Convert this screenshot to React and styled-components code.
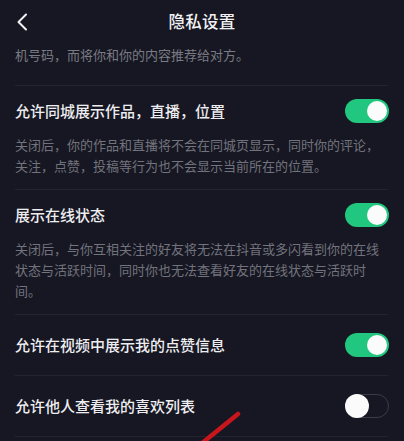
import React from "react";
import styled, { createGlobalStyle } from "styled-components";

const Global = createGlobalStyle`
  html, body { margin: 0; padding: 0; background: #161722; }
  body { font-family: "Noto Sans CJK SC", "Noto Sans", sans-serif; }
`;

const Page = styled.div`
  position: relative;
  width: 404px;
  height: 441px;
  overflow: hidden;
  background: #161722;
  color: #ececef;
  box-sizing: border-box;
`;

const Header = styled.header`
  position: relative;
  height: 42px;
  display: flex;
  align-items: center;
  justify-content: center;
`;

const Back = styled.button`
  position: absolute;
  left: 12px;
  top: 11px;
  width: 20px;
  height: 22px;
  padding: 0;
  border: none;
  background: transparent;
  display: flex;
  align-items: center;
  justify-content: center;
`;

const Title = styled.h1`
  margin: 0;
  font-size: 16.5px;
  font-weight: 500;
  color: #f2f2f4;
  letter-spacing: 0.3px;
`;

const Body = styled.div`
  padding: 0 16px 0 15px;
`;

const Intro = styled.p`
  margin: 0;
  padding: 2px 0 20px;
  font-size: 13px;
  line-height: 21px;
  color: #7a7b83;
  border-bottom: 1px solid #22242e;
`;

const Row = styled.div`
  border-bottom: 1px solid #22242e;
  padding: ${(p) => (p.$simple ? "0" : "14px 0 13px")};
  min-height: ${(p) => (p.$simple ? "60px" : "0")};
  display: flex;
  flex-direction: column;
  justify-content: center;
`;

const Head = styled.div`
  display: flex;
  align-items: center;
  justify-content: space-between;
  height: 22px;
`;

const Label = styled.span`
  font-size: 15px;
  font-weight: 500;
  color: #eeeef1;
  line-height: 22px;
`;

const Desc = styled.p`
  margin: 12px 0 0;
  font-size: 13px;
  line-height: 21px;
  color: #72737c;
`;

const Track = styled.span`
  position: relative;
  flex: none;
  width: 44px;
  height: 24px;
  border-radius: 12px;
  box-sizing: border-box;
  background: ${(p) => (p.$on ? "#21c77f" : "transparent")};
  border: ${(p) => (p.$on ? "none" : "1.5px solid #3a3c47")};
  margin-right: -1px;
`;

const Knob = styled.span`
  position: absolute;
  top: ${(p) => (p.$on ? "2px" : "-1.5px")};
  left: ${(p) => (p.$on ? "22px" : "-1.5px")};
  width: ${(p) => (p.$on ? "20px" : "24px")};
  height: ${(p) => (p.$on ? "20px" : "24px")};
  border-radius: 50%;
  background: #fbfbfb;
`;

const Mark = styled.svg`
  position: absolute;
  left: 195px;
  top: 410px;
  pointer-events: none;
`;

const Toggle = ({ on }) => (
  <Track $on={on}>
    <Knob $on={on} />
  </Track>
);

export default function App() {
  return (
    <>
      <Global />
      <Page>
        <Header>
          <Back aria-label="back">
            <svg width="12" height="18" viewBox="0 0 12 18">
              <path d="M10 1.5 L2.5 9 L10 16.5" fill="none" stroke="#f2f2f4" strokeWidth="2" strokeLinecap="round" strokeLinejoin="round" />
            </svg>
          </Back>
          <Title>隐私设置</Title>
        </Header>
        <Body>
          <Intro>机号码，而将你和你的内容推荐给对方。</Intro>
          <Row>
            <Head>
              <Label>允许同城展示作品，直播，位置</Label>
              <Toggle on />
            </Head>
            <Desc>
              关闭后，你的作品和直播将不会在同城页显示，同时你的评论，
              <br />
              关注，点赞，投稿等行为也不会显示当前所在的位置。
            </Desc>
          </Row>
          <Row>
            <Head>
              <Label>展示在线状态</Label>
              <Toggle on />
            </Head>
            <Desc>
              关闭后，与你互相关注的好友将无法在抖音或多闪看到你的在线
              <br />
              状态与活跃时间，同时你也无法查看好友的在线状态与活跃时
              <br />
              间。
            </Desc>
          </Row>
          <Row $simple>
            <Head>
              <Label>允许在视频中展示我的点赞信息</Label>
              <Toggle on />
            </Head>
          </Row>
          <Row $simple>
            <Head>
              <Label>允许他人查看我的喜欢列表</Label>
              <Toggle on={false} />
            </Head>
          </Row>
        </Body>
        <Mark width="50" height="35" viewBox="0 0 50 35">
          <path d="M43 4 L6 34" stroke="#c8161c" strokeWidth="4.5" strokeLinecap="round" />
        </Mark>
      </Page>
    </>
  );
}
